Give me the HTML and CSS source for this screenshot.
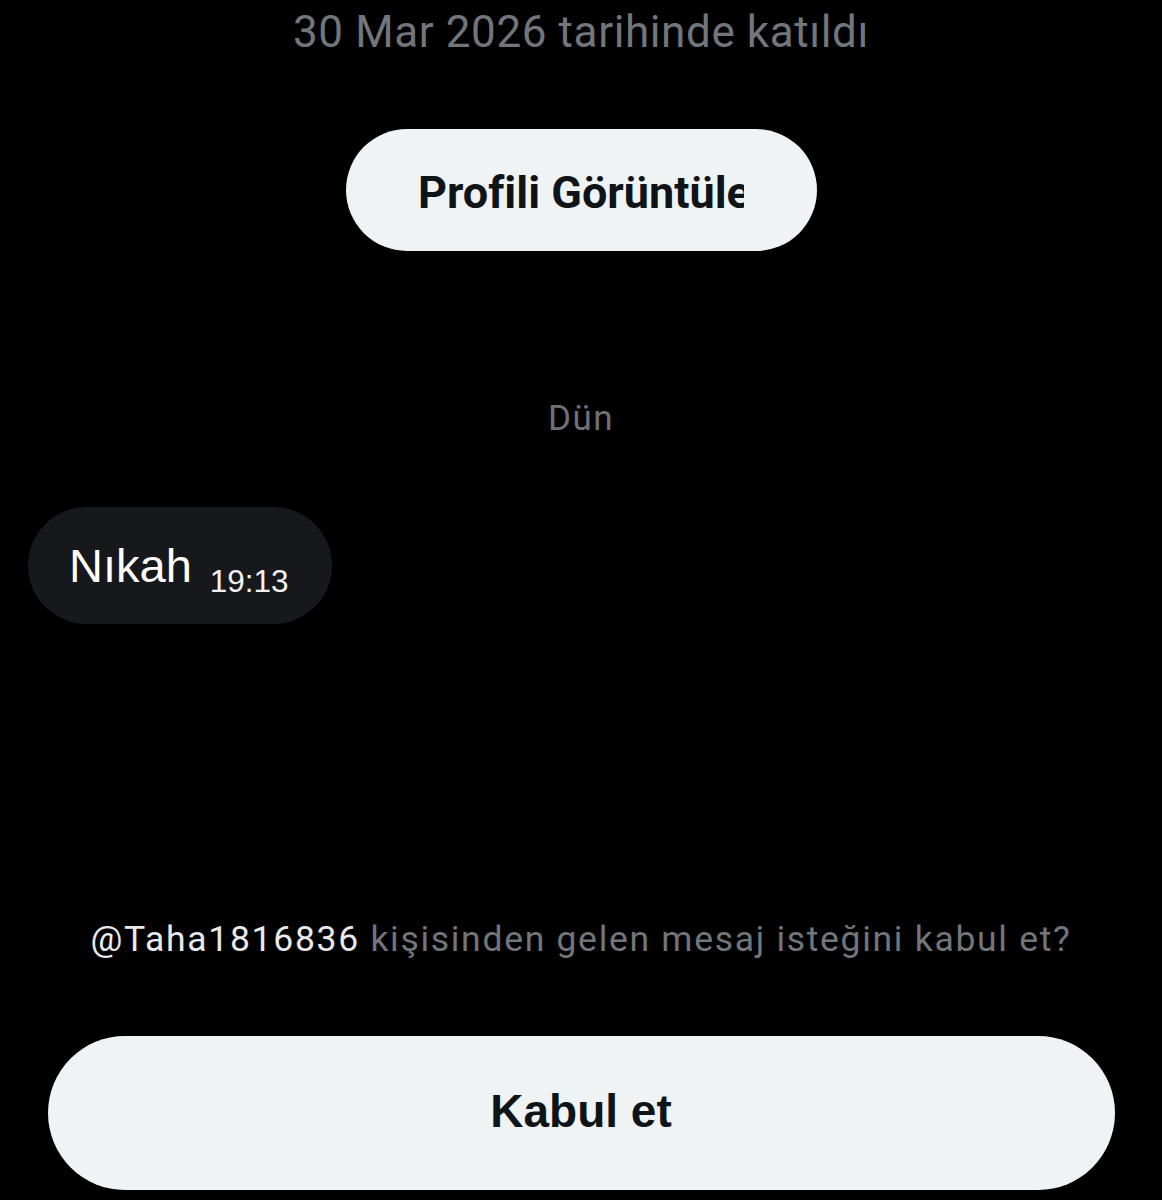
FILE: index.html
```html
<!DOCTYPE html>
<html lang="tr">
<head>
<meta charset="utf-8">
<title>Mesaj isteği</title>
<link rel="stylesheet" href="styles.css">
</head>
<body>
<main class="chat">
  <p class="joined">30 Mar 2026 tarihinde katıldı</p>
  <button class="btn-profile" type="button"><span class="btn-profile-label">Profili Görüntüle</span></button>
  <p class="day">Dün</p>
  <div class="bubble"><span class="msg-text">Nıkah</span><span class="msg-time">19:13</span></div>
  <p class="request"><span class="handle">@Taha1816836</span> kişisinden gelen mesaj isteğini kabul et?</p>
  <button class="btn-accept" type="button">Kabul et</button>
</main>
</body>
</html>
```

FILE: styles.css
```css
html, body {
  margin: 0;
  padding: 0;
  background: #000;
}

body {
  width: 1162px;
  height: 1200px;
  overflow: hidden;
  font-family: Roboto, "Liberation Sans", sans-serif;
}

.chat {
  display: flex;
  flex-direction: column;
  align-items: center;
  width: 1162px;
}

.joined {
  margin: 10px 0 0;
  font-size: 44px;
  line-height: 44px;
  letter-spacing: 0.6px;
  color: #71767b;
  white-space: nowrap;
}

.btn-profile {
  margin-top: 75px;
  width: 471px;
  height: 122px;
  box-sizing: border-box;
  padding: 5px 0 0;
  border: none;
  border-radius: 61px;
  background: #eff3f4;
  display: flex;
  align-items: center;
  justify-content: center;
  font-family: Roboto, "Liberation Sans", sans-serif;
}

.btn-profile-label {
  display: block;
  width: 326px;
  overflow: hidden;
  white-space: nowrap;
  font-size: 45px;
  line-height: 45px;
  font-weight: 700;
  color: #0f1419;
  text-align: left;
}

.day {
  margin: 149.5px 0 0;
  font-size: 35px;
  line-height: 35px;
  letter-spacing: 1.5px;
  color: #6e7176;
}

.bubble {
  align-self: flex-start;
  margin: 71.5px 0 0 28px;
  padding: 35px 43px 35px 41px;
  border-radius: 59px;
  background: #16181c;
  font-family: "Liberation Sans", Arial, sans-serif;
  font-size: 47px;
  line-height: 47px;
  color: #fff;
  white-space: nowrap;
}

.msg-time {
  margin-left: 18px;
  font-size: 31.5px;
  line-height: 0;
  vertical-align: -10px;
  color: #f2f2f2;
}

.request {
  margin: 298.2px 0 0;
  font-size: 35.5px;
  line-height: 35px;
  letter-spacing: 1.7px;
  color: #71767b;
  white-space: nowrap;
}

.handle {
  color: #e7e9ea;
}

.btn-accept {
  margin-top: 78.8px;
  width: 1067px;
  height: 154px;
  box-sizing: border-box;
  padding: 0 0 4px;
  border: none;
  border-radius: 77px;
  background: #eff3f4;
  font-family: "Liberation Sans", Arial, sans-serif;
  font-size: 46px;
  line-height: 46px;
  font-weight: 700;
  color: #0f1419;
}
```
